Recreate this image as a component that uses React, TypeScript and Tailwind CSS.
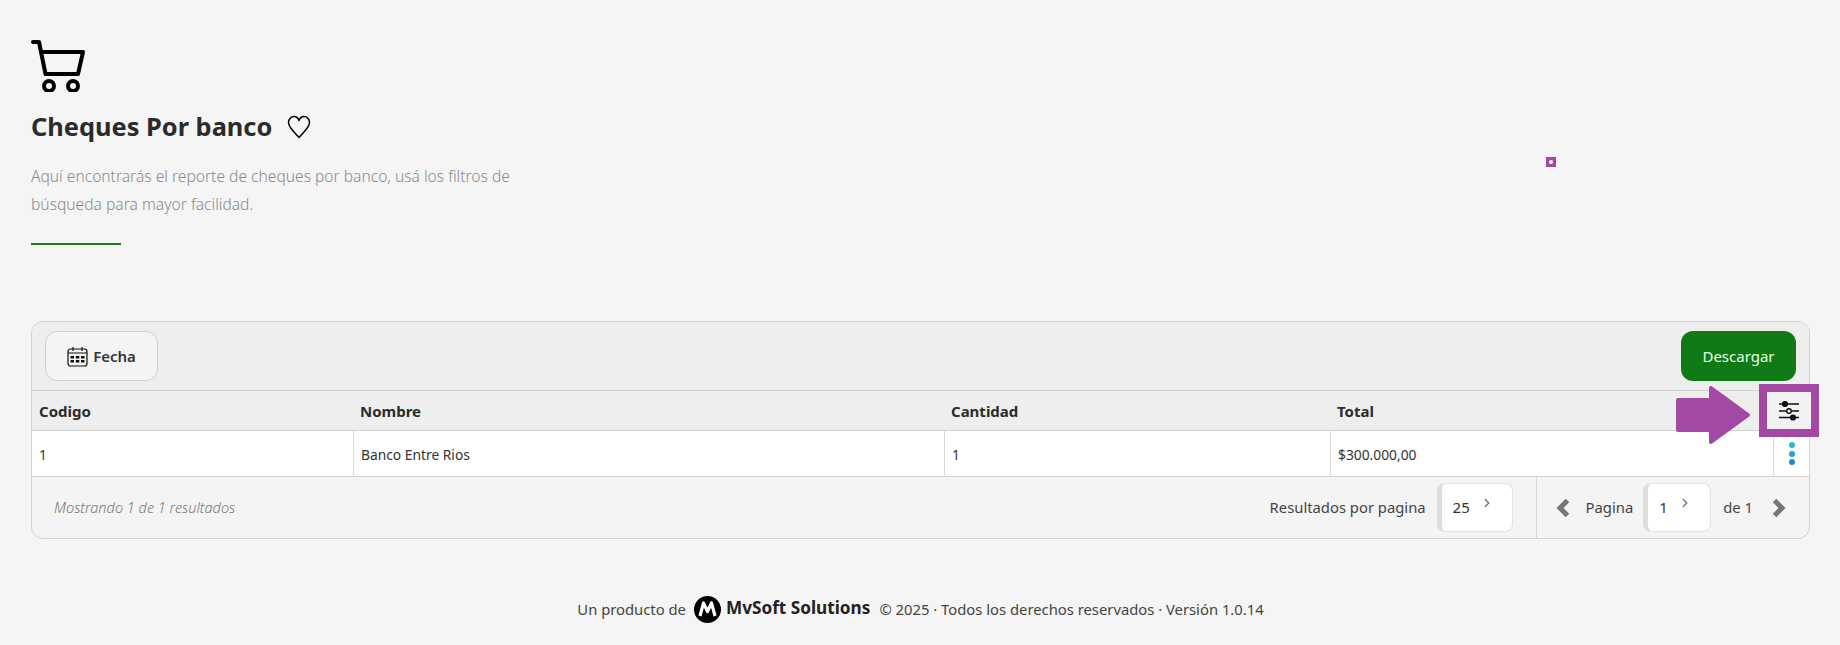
import { ChevronRight } from 'lucide-react';

function CartIcon() {
  return (
    <svg width="58" height="54" viewBox="0 0 58 54" fill="none" stroke="#000" strokeWidth="4" strokeLinecap="round" strokeLinejoin="round">
      <path d="M2 4h6l6.500 32h32.500l5-22H10" />
      <circle cx="18" cy="48" r="5" />
      <circle cx="42" cy="48" r="5" />
    </svg>
  );
}

function HeartIcon() {
  return (
    <svg width="24" height="24" viewBox="0 0 24 24" fill="none" stroke="#000" strokeWidth="1.500" strokeLinejoin="round">
      <path d="M12 22.500C6 16 1.500 12 1.500 7.500C1.500 4 4 1.500 7 1.500C9.200 1.500 11 2.800 12 5.500C13 2.800 14.800 1.500 17 1.500C20 1.500 22.500 4 22.500 7.500C22.500 12 18 16 12 22.500Z" />
    </svg>
  );
}

function CalendarIcon() {
  return (
    <svg width="21" height="21" viewBox="0 0 21 21" fill="none" stroke="#111" strokeWidth="1.200">
      <rect x="1" y="3" width="19" height="17" rx="2.500" />
      <path d="M1 7h19M6 1v4M15 1v4" />
      <path d="M3.500 10h3.500v2.500h-3.500zM8.800 10h3.500v2.500h-3.500zM14 10h3.500v2.500h-3.500zM3.500 14h3.500v2.500h-3.500zM8.800 14h3.500v2.500h-3.500zM14 14h3.500v2.500h-3.500z" fill="#111" stroke="none" />
    </svg>
  );
}

function SlidersIcon() {
  return (
    <svg width="20" height="20" viewBox="0 0 20 20" fill="none" stroke="#111" strokeWidth="1.400">
      <path d="M0 3h20M0 10h20M0 16.500h20" />
      <circle cx="6" cy="3" r="2.400" fill="#111" />
      <circle cx="10" cy="10" r="2.300" fill="#f2f2f2" />
      <circle cx="14" cy="16.500" r="2.400" fill="#111" />
    </svg>
  );
}

function BoldChevron({ dir }: { dir: 'left' | 'right' }) {
  return (
    <svg width="16" height="20" viewBox="0 0 16 20" fill="none" stroke="#777" strokeWidth="5">
      <path d={dir === 'left' ? 'M12.500 2.500L5 10l7.500 7.500' : 'M3.500 2.500L11 10l-7.500 7.500'} />
    </svg>
  );
}

function PageInput({ value, width }: { value: string; width: string }) {
  return (
    <div className={`${width} h-[49px] flex items-start bg-white border border-[#e2e2e2] border-l-[5px] border-l-[#dcdcdc] rounded-lg pl-[11px] pr-2`}>
      <span className="mt-[11px] text-[15px] leading-[24px] text-[#333]">{value}</span>
      <ChevronRight size={14} strokeWidth={2.500} className="ml-auto mr-[10px] mt-[12px] text-[#777]" />
    </div>
  );
}

export default function App() {
  return (
    <div className="relative min-h-[645px] bg-[#f5f5f5] pl-[31px] pr-[30px] pt-[38px] font-['Noto_Sans','Open_Sans',sans-serif] text-[#333] overflow-hidden">
      {/* Encabezado */}
      <CartIcon />
      <div className="mt-[13px] flex items-center gap-[15px] h-[44px]">
        <h1 className="text-[25.400px] font-bold text-[#2b2b2b] leading-none">Cheques Por banco</h1>
        <HeartIcon />
      </div>
      <p className="mt-[13px] w-[500px] text-[15.600px] leading-[28px] font-light text-[#8a8a8a]">
        Aquí encontrarás el reporte de cheques por banco, usá los filtros de búsqueda para mayor facilidad.
      </p>
      <div className="mt-[25px] w-[90px] h-[2px] bg-[#1f7a1f]" />

      {/* Tabla */}
      <div className="mt-[76px] border border-[#d2d2d2] rounded-xl overflow-hidden bg-[#f4f4f4]">
        <div className="h-[69px] flex items-center justify-between pl-[13px] pr-[13px] bg-[#eeeeee] border-b border-[#d2d2d2]">
          <button className="w-[113px] h-[50px] flex items-center justify-center gap-[5px] bg-[#f4f4f4] border border-[#d0d0d0] rounded-xl text-[15px] font-semibold text-[#333]">
            <CalendarIcon />
            Fecha
          </button>
          <button className="w-[115px] h-[50px] bg-[#0f7a16] rounded-xl text-[15px] text-[#eaffea]">Descargar</button>
        </div>

        <div className="h-[40px] pt-[1px] grid grid-cols-[321px_591px_386px_443px_1fr] items-center bg-[#eeeeee] border-b border-[#d2d2d2] text-[15px] font-bold text-[#2b2b2b]">
          <div className="pl-[7px]">Codigo</div>
          <div className="pl-[7px]">Nombre</div>
          <div className="pl-[7px]">Cantidad</div>
          <div className="pl-[7px]">Total</div>
          <div />
        </div>

        <div className="h-[46px] grid grid-cols-[321px_591px_386px_443px_1fr] bg-white border-b border-[#d2d2d2] text-[13.800px] text-[#333]">
          <div className="pl-[7px] pt-[3px] flex items-center">1</div>
          <div className="pl-[7px] pt-[3px] flex items-center border-l border-[#d9d9d9]">Banco Entre Rios</div>
          <div className="pl-[7px] pt-[3px] flex items-center border-l border-[#d9d9d9]">1</div>
          <div className="pl-[7px] pt-[3px] flex items-center border-l border-[#d9d9d9]">$300.000,00</div>
          <div className="flex flex-col items-center justify-center gap-[2.500px] border-l border-[#d9d9d9]">
            <span className="w-[6px] h-[6px] rounded-full bg-[#2fb0e6]" />
            <span className="w-[6px] h-[6px] rounded-full bg-[#2a9fe0]" />
            <span className="w-[6px] h-[6px] rounded-full bg-[#1e88d8]" />
          </div>
        </div>

        <div className="h-[61px] flex items-center text-[14.800px] text-[#444]">
          <span className="ml-[22px] text-[14.500px] italic font-light text-[#777]">Mostrando 1 de 1 resultados</span>
          <span className="ml-auto mr-[11px]">Resultados por pagina</span>
          <PageInput value="25" width="w-[76px]" />
          <div className="ml-[23px] h-full flex items-center border-l border-[#d9d9d9] pl-[18px] pr-[22px]">
            <BoldChevron dir="left" />
            <span className="ml-[15px] mr-[10px]">Pagina</span>
            <PageInput value="1" width="w-[68px]" />
            <span className="ml-[12px]">de 1</span>
            <span className="ml-[18px]">
              <BoldChevron dir="right" />
            </span>
          </div>
        </div>
      </div>

      {/* Pie */}
      <div className="mt-[57px] flex items-center justify-center text-[14.800px] text-[#444]">
        <span>Un producto de</span>
        <svg className="ml-[8px]" width="27" height="27" viewBox="0 0 27 27">
          <circle cx="13.500" cy="13.500" r="13.500" fill="#000" />
          <path d="M6 20L9.500 7L13.500 15.500L17.500 7L21 20" fill="none" stroke="#fff" strokeWidth="3.200" strokeLinejoin="round" />
        </svg>
        <span className="ml-[5px] mr-[9px] text-[17.200px] font-bold text-[#222] -mt-[3px]">MvSoft Solutions</span>
        <span>© 2025 · Todos los derechos reservados · Versión 1.0.14</span>
      </div>

      {/* Marcas sobre la captura */}
      <div className="absolute left-[1546px] top-[157px] w-[10px] h-[10px] bg-[#a349a4] flex items-center justify-center">
        <span className="w-[4px] h-[4px] rounded-full bg-white" />
      </div>
      <svg className="absolute left-[1676px] top-[385px]" width="76" height="60" viewBox="0 0 76 60">
        <path d="M2 15H35V3L72 30L35 57V45H2Z" fill="#a349a4" stroke="#a349a4" strokeWidth="4" strokeLinejoin="round" />
      </svg>
      <div className="absolute left-[1759px] top-[384px] w-[60px] h-[53px] bg-[#f2f2f2] border-[8px] border-[#a349a4] flex items-center justify-center">
        <SlidersIcon />
      </div>
    </div>
  );
}
